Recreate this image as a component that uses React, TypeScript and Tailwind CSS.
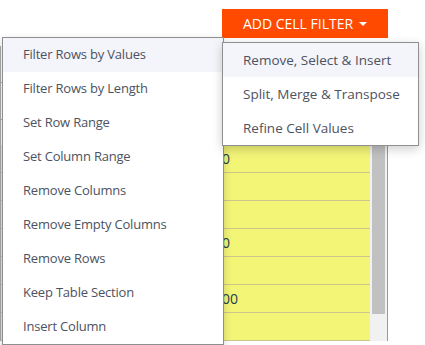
import React from "react";

const leftItems = [
  "Filter Rows by Values",
  "Filter Rows by Length",
  "Set Row Range",
  "Set Column Range",
  "Remove Columns",
  "Remove Empty Columns",
  "Remove Rows",
  "Keep Table Section",
  "Insert Column",
];

const rightItems = ["Remove, Select & Insert", "Split, Merge & Transpose", "Refine Cell Values"];

const rows = ["10", "", "", "10", "", "100", ""];

export default function App() {
  return (
    <div
      className="relative w-[425px] h-[345px] overflow-hidden bg-white"
      style={{ fontFamily: '"Open Sans", "Noto Sans", sans-serif' }}
    >
      {/* toolbar */}
      <div className="pt-[9px] pl-[222px]">
        <button className="flex items-center justify-center gap-[6px] w-[166px] h-[29px] bg-[#ff4a00] text-white text-[14px] leading-none">
          ADD CELL FILTER
          <span className="w-0 h-0 border-x-[4px] border-x-transparent border-t-[4px] border-t-white" />
        </button>
      </div>

      {/* table behind the menus */}
      <div className="flex w-[388px] border-r border-[#999] mt-[8px]">
        <div className="w-[370px] border-l border-[#aaa]">
          <div className="h-[37px] border-b border-[#aaa]" />
          <div className="h-[37px] border-b border-[#aaa]" />
          <div className="h-[25px]" />
          {rows.map((t, i) => (
            <div
              key={i}
              className="h-[28px] bg-[#f3f577] border-b border-[#cdc68c] flex items-center pl-[213px] text-[14px] text-[#24404f]"
            >
              {t}
            </div>
          ))}
        </div>
        <div className="w-[17px] bg-[#f1f1f1] pt-[2px] px-[2px] pb-[27px] flex flex-col">
          <div className="flex-1 bg-[#c1c1c1]" />
        </div>
      </div>

      {/* left dropdown */}
      <div className="absolute left-[2px] top-[37px] w-[222px] bg-white border border-[#8f8f8f] shadow-[0_3px_8px_rgba(0,0,0,0.18)]">
        {leftItems.map((t, i) => (
          <div
            key={t}
            className={`h-[34px] flex items-center pl-[20px] pb-[1px] text-[13px] tracking-[-0.2px] text-[#4d5261] ${
              i === 0 ? "bg-[#f4f4fb]" : ""
            }`}
          >
            {t}
          </div>
        ))}
      </div>

      {/* right submenu */}
      <div className="absolute left-[222px] top-[42px] w-[197px] bg-white border border-[#8f8f8f] shadow-[0_3px_10px_rgba(0,0,0,0.2)]">
        {rightItems.map((t, i) => (
          <div
            key={t}
            className={`h-[34px] flex items-center pl-[20px] text-[13.5px] text-[#4d5261] ${
              i === 0 ? "bg-[#f4f4fb]" : ""
            }`}
          >
            {t}
          </div>
        ))}
      </div>
    </div>
  );
}
